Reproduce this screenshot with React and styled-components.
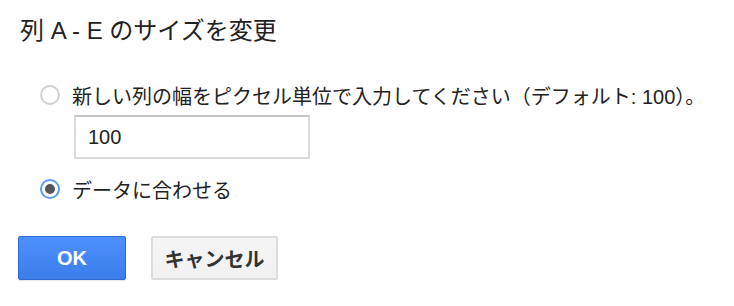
import React from "react";
import styled, { createGlobalStyle } from "styled-components";

const Global = createGlobalStyle`
  html, body { margin: 0; padding: 0; background: #fff; }
  body { font-family: "Liberation Sans", "Noto Sans CJK JP", sans-serif; color: #222; }
`;

const Dialog = styled.div`
  display: flex;
  flex-direction: column;
  align-items: flex-start;
  padding: 15px 0 0 19px;
  width: 734px;
  height: 306px;
  box-sizing: border-box;
`;

const Title = styled.div`
  font-size: 24px;
  line-height: 32px;
  color: #222;
  margin-left: 1px;
`;

const Options = styled.div`
  display: flex;
  flex-direction: column;
  align-items: flex-start;
  margin: 37px 0 0 21px;
`;

const Row = styled.label`
  display: flex;
  align-items: center;
  gap: 12px;
  height: 22px;
  font-size: 20px;
  color: #222;
  white-space: nowrap;
  margin-top: ${(p) => p.$mt || 0}px;
`;

const Radio = styled.span`
  width: 20px;
  height: 20px;
  box-sizing: border-box;
  border-radius: 50%;
  border: ${(p) => (p.$checked ? "2px solid #5d9cf5" : "2px solid #d0d0d0")};
  background: #fff;
  display: flex;
  align-items: center;
  justify-content: center;
  flex: none;
  &::after {
    content: "";
    display: ${(p) => (p.$checked ? "block" : "none")};
    width: 10px;
    height: 10px;
    border-radius: 50%;
    background: #555;
  }
`;

const Input = styled.input`
  margin: 9px 0 0 34px;
  width: 236px;
  height: 44px;
  box-sizing: border-box;
  border: 2px solid #dadada;
  border-top-color: #c4c4c4;
  padding: 0 12px;
  font-family: "Liberation Sans", sans-serif;
  font-size: 20px;
  color: #222;
  outline: none;
`;

const Buttons = styled.div`
  display: flex;
  gap: 25px;
  margin-top: 36px;
  margin-left: -1px;
`;

const Button = styled.button`
  height: 44px;
  width: ${(p) => p.$w}px;
  box-sizing: border-box;
  border-radius: 2px;
  font-family: "Liberation Sans", "Noto Sans CJK JP", sans-serif;
  font-weight: bold;
  font-size: 20px;
  padding: 0;
  cursor: pointer;
  ${(p) =>
    p.$primary
      ? `
    color: #fff;
    background: linear-gradient(#4d90fe, #3b7ee9);
    border: 1.5px solid #2f6bd1;
    box-shadow: 0 1px 1px rgba(0,0,0,0.1);
  `
      : `
    color: #333;
    background: linear-gradient(#f5f5f5, #f1f1f1);
    border: 2px solid #dcdcdc;
  `}
`;

export default function App() {
  return (
    <>
      <Global />
      <Dialog>
        <Title>列 A - E のサイズを変更</Title>
        <Options>
          <Row>
            <Radio />
            新しい列の幅をピクセル単位で入力してください（デフォルト: 100）。
          </Row>
          <Input defaultValue="100" />
          <Row $mt={19}>
            <Radio $checked />
            データに合わせる
          </Row>
        </Options>
        <Buttons>
          <Button $primary $w={108}>OK</Button>
          <Button $w={127}>キャンセル</Button>
        </Buttons>
      </Dialog>
    </>
  );
}
